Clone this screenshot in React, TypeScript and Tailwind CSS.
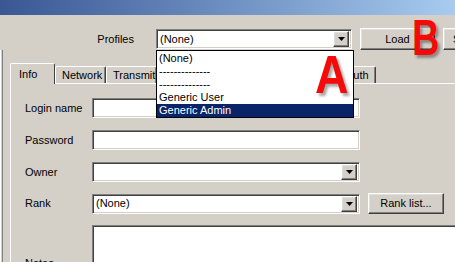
import React from 'react'

const sunken =
  'border border-[#808080] border-b-white border-r-white shadow-[inset_1px_1px_0_#404040,inset_-1px_-1px_0_#d4d0c8] bg-white'
const raised =
  'border border-white border-b-[#404040] border-r-[#404040] shadow-[inset_-1px_-1px_0_#808080,inset_1px_1px_0_#dfdfdf] bg-[#d4d0c8]'

function ArrowButton() {
  return (
    <div className={`${raised} w-[16px] h-[16px] flex items-center justify-center shrink-0`}>
      <svg width="7" height="4" viewBox="0 0 7 4">
        <path d="M0 0h7L3.5 4z" fill="#000" />
      </svg>
    </div>
  )
}

function Combo({ value, width }: { value?: string; width: string }) {
  return (
    <div className={`${sunken} ${width} h-[20px] shrink-0 flex items-center pl-[3px] pr-[2px]`}>
      <span className="flex-1 leading-none">{value}</span>
      <ArrowButton />
    </div>
  )
}

interface TabProps {
  label: string
  width: string
  active?: boolean
}

function Tab({ label, width, active = false }: TabProps) {
  return (
    <div
      className={`${width} shrink-0 flex items-center pl-[6px] border-t border-l border-white border-r border-r-[#404040] rounded-t-[2px] bg-[#d4d0c8] ${
        active ? 'h-[21px] -mb-px relative z-10 pl-[8px]' : 'h-[17px] shadow-[inset_-1px_0_0_#808080]'
      }`}
    >
      {label}
    </div>
  )
}

function FieldRow({ label, children, className = '' }: { label: string; children: React.ReactNode; className?: string }) {
  return (
    <div className={`flex items-center ${className}`}>
      <span className="w-[67px] shrink-0">{label}</span>
      {children}
    </div>
  )
}

export default function App() {
  const items = ['(None)', '--------------', '--------------', 'Generic User', 'Generic Admin']

  return (
    <div className="w-[455px] h-[262px] bg-[#d4d0c8] relative overflow-hidden flex flex-col text-[11px] text-black font-['Liberation_Sans',Arial,sans-serif]">
      {/* Title bar */}
      <div className="h-[15px] shrink-0 bg-gradient-to-r from-[#3a5794] to-[#a8cbef]" />

      {/* Profiles row */}
      <div className="mt-[13px] h-[22px] flex items-center shrink-0">
        <span className="w-[134px] shrink-0 text-right">Profiles</span>
        <div className="ml-[22px] shrink-0">
          <Combo value="(None)" width="w-[196px]" />
        </div>
        <button className={`${raised} ml-[8px] w-[75px] h-[22px] shrink-0 flex items-center justify-center`}>
          Load
        </button>
        <button className={`${raised} ml-[8px] w-[75px] h-[22px] shrink-0 flex items-center justify-start pl-[9px]`}>
          Save
        </button>
      </div>

      <div className="flex flex-1 min-h-0">
        {/* left frame edge */}
        <div className="w-[3px] shrink-0 border-l border-white border-r border-r-[#808080]" />

        <div className="ml-[7px] flex-1 flex flex-col min-w-0">
          {/* Tabs */}
          <div className="mt-[13px] h-[20px] flex items-end shrink-0">
            <Tab label="Info" width="w-[45px]" active />
            <Tab label="Network" width="w-[51px]" />
            <Tab label="Transmit" width="w-[51px]" />
            <Tab label="Options" width="w-[61px]" />
            <Tab label="Advanced" width="w-[61px]" />
            <Tab label="Logging" width="w-[60px]" />
            <Tab label="Auth" width="w-[37px]" />
          </div>

          {/* Panel */}
          <div className="flex-1 border-t border-l border-white pl-[14px] pt-[14px] flex flex-col">
            <FieldRow label="Login name">
              <div className={`${sunken} w-[268px] h-[20px] shrink-0`} />
            </FieldRow>
            <FieldRow label="Password" className="mt-[12px]">
              <div className={`${sunken} w-[268px] h-[20px] shrink-0`} />
            </FieldRow>
            <FieldRow label="Owner" className="mt-[12px]">
              <Combo width="w-[268px]" />
            </FieldRow>
            <FieldRow label="Rank" className="mt-[11px]">
              <Combo value="(None)" width="w-[268px]" />
              <button className={`${raised} ml-[8px] w-[76px] h-[21px] shrink-0 flex items-center justify-center`}>
                Rank list...
              </button>
            </FieldRow>
            <div className="mt-[11px] flex items-start">
              <span className="w-[67px] shrink-0 mt-[30px]">Notes</span>
              <div className={`${sunken} w-[380px] h-[60px] shrink-0`} />
            </div>
          </div>
        </div>
      </div>

      {/* Opened profiles list */}
      <div className="absolute left-[156px] top-[50px] w-[198px] h-[68px] bg-white border border-black flex flex-col pt-px z-20">
        {items.map((it, i) => (
          <div
            key={i}
            className={`h-[13px] leading-[13px] pl-[2px] ${i === items.length - 1 ? 'bg-[#0a246a] text-white' : ''}`}
          >
            {it}
          </div>
        ))}
      </div>

      {/* Annotation letters */}
      <span className="absolute left-[315px] top-[47px] z-30 text-[#f50a0a] font-bold text-[54px] leading-none scale-x-[0.86] origin-left [text-shadow:3px_3px_3px_rgba(0,0,0,0.35)]">
        A
      </span>
      <span className="absolute left-[412px] top-[13px] z-30 text-[#f50a0a] font-bold text-[50px] leading-none scale-x-[0.76] origin-left [text-shadow:3px_3px_3px_rgba(0,0,0,0.35)]">
        B
      </span>
    </div>
  )
}
